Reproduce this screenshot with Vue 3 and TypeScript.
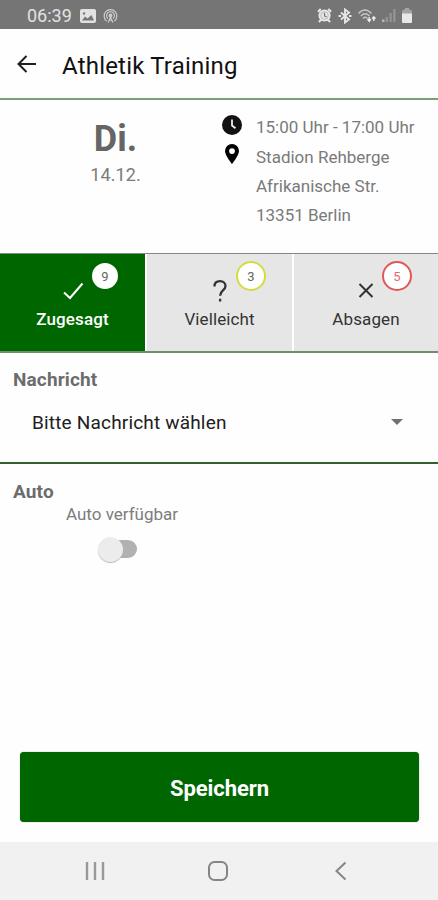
<script setup lang="ts">
import { ref } from 'vue'

type Answer = 'yes' | 'maybe' | 'no'

interface Option {
  id: Answer
  label: string
  count: number
}

const options: Option[] = [
  { id: 'yes', label: 'Zugesagt', count: 9 },
  { id: 'maybe', label: 'Vielleicht', count: 3 },
  { id: 'no', label: 'Absagen', count: 5 },
]
const address: string[] = ['Stadion Rehberge', 'Afrikanische Str.', '13351 Berlin']
const selected = ref<Answer>('yes')
const carAvailable = ref(false)
</script>

<template>
  <div class="screen">
    <div class="status">
      <span class="time">06:39</span>
      <svg class="s-image" viewBox="0 0 16 14"><rect width="16" height="14" rx="2" fill="#e2e2e2" /><path d="M2 11.500l3-4 2.500 2 4-3.500 2.500 5.500z" fill="#777" /><circle cx="4" cy="4.500" r="1.200" fill="#777" /></svg>
      <svg class="s-cast" viewBox="0 0 16 16" fill="none" stroke="#cfcfcf" stroke-width="1.200"><path d="M4 13.500a6.800 6.800 0 1 1 8 0M5.200 10.800a4.200 4.200 0 1 1 5.600 0" /><circle cx="8" cy="7.500" r="1.500" fill="#cfcfcf" /><path d="M8 9l-2.500 6M8 9l2.500 6M6.500 12.500h3" /></svg>
      <div class="status-right">
        <svg width="15" height="15" viewBox="0 0 16 16"><path d="M1 4l3-3M15 4l-3-3M2 15l3-3M14 15l-3-3" stroke="#e6e6e6" stroke-width="2.200" /><circle cx="8" cy="8" r="6.500" fill="#e6e6e6" /><circle cx="8" cy="8" r="4" fill="none" stroke="#aaa" stroke-width=".7" /><path d="M8 5V8.500l2.200 1" fill="none" stroke="#777" stroke-width="1.300" /></svg>
        <svg width="14" height="16" viewBox="0 0 14 16" fill="none" stroke="#e6e6e6" stroke-width="1.900"><path d="M3 4.500l8 7L7 14.500V1.500l4 3-8 7" /><path d="M.5 8H3M11 8h2.500" /></svg>
        <svg width="18" height="16" viewBox="0 0 18 16" fill="none"><path d="M.5 5.500Q7 -1.500 13.500 5.500M2.800 8Q7 3.500 11.500 8M5 10.500Q7 8 9.500 10.500" stroke="#c6c6c6" stroke-width="1.300" /><path d="M11.200 9v4M15.800 9v4M9.500 11.300l1.700 2 1.700-2M14.100 10.800l1.700-2 1.700 2" stroke="#eee" stroke-width="1.400" /></svg>
        <svg width="14" height="15" viewBox="0 0 14 15"><path d="M3.700 9h2.300v5H3.700zM7.500 5h2.300v9H7.500zM11.200 1h2.300v13h-2.300z" fill="#949494" /><path d="M0 11.500h2.500V14H0z" fill="#bbb" /></svg>
        <svg width="10" height="15" viewBox="0 0 10 15"><path d="M3 0h4v1.500h1q2 .5 2 2V6H0V3.500q0-1.500 2-2h1z" fill="#a4a4a4" /><path d="M0 5.500h10V14q0 1-1 1H1q-1 0-1-1z" fill="#e8e8e8" /></svg>
      </div>
    </div>

    <header class="header">
      <svg class="back" viewBox="0 0 20 18" fill="none" stroke="#202020" stroke-width="2"><path d="M19 9H2M9.500 1L1.500 9l8 8" /></svg>
      <h1>Athletik Training</h1>
    </header>

    <section class="info">
      <div class="date">
        <strong>Di.</strong>
        <span>14.12.</span>
      </div>
      <div class="details">
        <div class="detail">
          <svg class="clock" viewBox="0 0 20 20"><circle cx="10" cy="10" r="10" fill="#111" /><path d="M10 4.500V10.500l3.500 2.800" fill="none" stroke="#eee" stroke-width="1.800" /></svg>
          <p>15:00 Uhr - 17:00 Uhr</p>
        </div>
        <div class="detail place">
          <svg class="pin" viewBox="0 0 14 20"><path fill-rule="evenodd" d="M7 0a7 7 0 0 0-7 7c0 4.500 7 13 7 13s7-8.500 7-13a7 7 0 0 0-7-7zm0 4.200a2.900 2.900 0 1 1 0 5.800 2.900 2.900 0 0 1 0-5.800z" /></svg>
          <div>
            <p v-for="line in address" :key="line">{{ line }}</p>
          </div>
        </div>
      </div>
    </section>

    <div class="tabs">
      <button v-for="o in options" :key="o.id" class="tab" :class="[o.id, { active: selected === o.id }]" @click="selected = o.id">
        <svg v-if="o.id === 'yes'" class="glyph" viewBox="0 0 24 24"><path d="M3 13.500l6 5.500L21.500 4.500" /></svg>
        <svg v-else-if="o.id === 'maybe'" class="glyph question" viewBox="0 0 24 24"><path d="M6.500 7.500C6.500 4 8.700 2.200 12 2.200s5.500 2 5.500 4.800c0 4.400-5.400 4.600-5.400 9.700M12.100 19.700v2.800" /></svg>
        <svg v-else class="glyph" viewBox="0 0 24 24"><path d="M5.500 5l13 13M18.500 5l-13 13" /></svg>
        <span class="label">{{ o.label }}</span>
        <span class="badge">{{ o.count }}</span>
      </button>
    </div>

    <section class="message">
      <h2>Nachricht</h2>
      <div class="select">
        <span>Bitte Nachricht wählen</span>
        <i class="caret"></i>
      </div>
    </section>

    <section class="car">
      <h2>Auto</h2>
      <div class="car-option">
        <span class="car-label">Auto verfügbar</span>
        <button class="switch" :class="{ on: carAvailable }" aria-label="Auto verfügbar" @click="carAvailable = !carAvailable"><i></i></button>
      </div>
    </section>

    <button class="save">Speichern</button>

    <nav class="nav">
      <svg viewBox="0 0 24 24"><path class="bars" d="M4 3v18M12 3v18M20 3v18" /></svg>
      <svg viewBox="0 0 24 24"><rect x="3" y="3" width="18" height="18" rx="5.500" /></svg>
      <svg viewBox="0 0 24 24"><path d="M16.500 3.500L7.500 12l9 8.500" /></svg>
    </nav>
  </div>
</template>

<style>
body { margin: 0; background: #fefefe; }
</style>

<style scoped>
* { box-sizing: border-box; }
h1, h2, p { margin: 0; font-weight: 400; }
button { border: 0; padding: 0; font: inherit; cursor: pointer; }
.screen { width: 438px; height: 900px; display: flex; flex-direction: column; overflow: hidden; background: #fefefe; font-family: Roboto, "Liberation Sans", sans-serif; }
.status { height: 29px; flex: none; display: flex; align-items: center; padding: 2px 26px 0 27px; background: #757575; color: #e2e2e2; }
.time { width: 45px; font-size: 18px; white-space: nowrap; }
.s-image { width: 16px; height: 14px; margin-left: 8px; }
.s-cast { width: 15px; height: 16px; margin-left: 7px; }
.status-right { margin-left: auto; display: flex; align-items: center; gap: 6px; }
.header { height: 71px; flex: none; display: flex; align-items: center; padding: 1px 0 0 17px; border-bottom: 2px solid #7c9d79; }
.back { width: 20px; height: 18px; }
h1 { margin: 4px 0 0 25px; font-size: 24px; letter-spacing: .2px; line-height: 30px; color: #111; white-space: nowrap; }
.info { height: 153px; flex: none; display: flex; color: #7a7a7a; }
.date { width: 231px; padding-top: 18px; display: flex; flex-direction: column; align-items: center; }
.date strong { font-size: 36px; line-height: 42px; color: #666; }
.date span { font-size: 18px; line-height: 22px; margin-top: 4px; letter-spacing: .1px; }
.details { padding: 13px 0 0; margin-left: -10px; }
.detail { display: flex; font-size: 17px; line-height: 29px; white-space: nowrap; }
.clock { width: 20px; height: 20px; margin: 2px 14px 0 1px; }
.pin { width: 14px; height: 20px; margin: 1px 17px 0 4px; }
.place { margin-top: 1px; }
.tabs { height: 100px; flex: none; display: grid; grid-template-columns: 145px 145px 1fr; gap: 2px; border-top: 1px solid #868686; border-bottom: 2px solid #6d8f69; background: #fff; }
.tab { position: relative; display: flex; flex-direction: column; align-items: center; padding-top: 25px; background: #e6e6e6; color: #333; }
.tab.active { background: #060; color: #fff; }
.glyph { width: 24px; height: 24px; fill: none; stroke: currentColor; stroke-width: 2; }
.question { stroke-width: 2.3; }
.label { margin-top: 5px; font-size: 17px; line-height: 22px; letter-spacing: .1px; }
.active .label { font-weight: 500; }
.badge { position: absolute; top: 7px; left: 90px; width: 30px; height: 30px; border-radius: 50%; border: 2px solid #060; background: #fff; color: #666; font-size: 13px; line-height: 27px; text-align: center; }
.maybe .badge { border-color: #d3dc43; left: 89px; }
.no .badge { border-color: #df5853; color: #df7070; left: 88px; }
.message { height: 111px; flex: none; padding: 14px 0 0 13px; border-bottom: 2px solid #345f34; }
h2 { font-size: 19px; line-height: 25px; font-weight: 700; color: #6c6c6c; letter-spacing: .15px; }
.select { display: flex; align-items: center; justify-content: space-between; margin-top: 17px; padding: 0 35px 0 19px; height: 26px; font-size: 19px; color: #202020; letter-spacing: .18px; }
.caret { border: 6px solid transparent; border-top-color: #707070; border-bottom: 0; }
.car { padding: 15px 0 0 13px; }
.car-option { width: 112px; margin: -1px 0 0 53px; display: flex; flex-direction: column; align-items: center; }
.car-label { font-size: 17px; line-height: 22px; color: #7c7c7c; white-space: nowrap; }
.switch { position: relative; width: 39px; height: 26px; margin: 11px 0 0 -9px; display: flex; align-items: center; background: none; }
.switch::before { content: ""; position: absolute; left: 5px; right: 0; top: 4px; height: 18px; border-radius: 9px; background: #b1b1b1; }
.switch i { position: relative; width: 25px; height: 25px; border-radius: 50%; background: #ececec; box-shadow: 0 1px 1px #bbb; }
.switch.on { justify-content: flex-end; }
.save { flex: none; height: 70px; margin: auto 19px 20px 20px; border-radius: 4px; background: #060; color: #fff; font-size: 22px; font-weight: 700; letter-spacing: -.1px; box-shadow: 0 0 1px #555; padding-top: 3px; }
.nav { height: 58px; flex: none; display: flex; justify-content: center; gap: 99px; padding: 17px 3px 0 0; background: #f1f1f1; }
.nav svg { width: 24px; height: 24px; fill: none; stroke: #858585; stroke-width: 2; }
.nav .bars { stroke: #999; stroke-width: 2.4; }
</style>
